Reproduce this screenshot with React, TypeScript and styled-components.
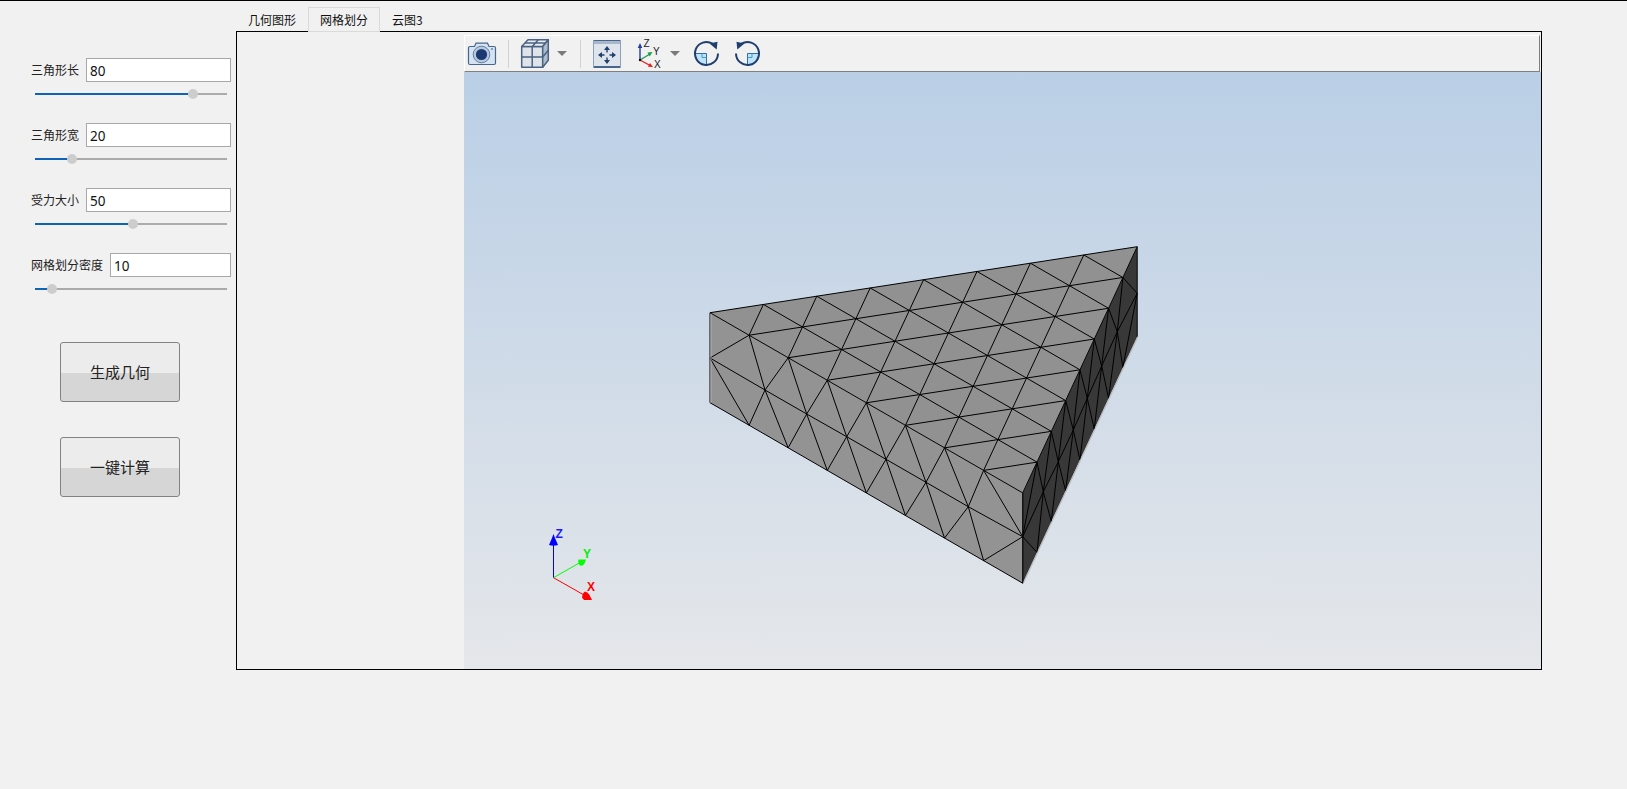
import React from "react";
import styled, { createGlobalStyle } from "styled-components";

const GlobalStyle = createGlobalStyle`
  html, body { margin: 0; padding: 0; background: #f1f1f1; overflow: hidden; }
  body { font-family: "Noto Sans CJK SC", "Noto Sans", sans-serif; }
  #root { width: 1627px; height: 789px; }
`;

const Page = styled.div`
  display: flex;
  width: 1627px;
  height: 789px;
  box-sizing: border-box;
  border-top: 1px solid #000;
  background: #f1f1f1;
`;

const Sidebar = styled.aside`
  width: 236px;
  flex: none;
  box-sizing: border-box;
  padding: 57px 0 0 31px;
  display: flex;
  flex-direction: column;
`;

const ParamGroup = styled.div`
  width: 200px;
  height: 42px;
  margin-bottom: 23px;
`;

const ParamRow = styled.div`
  display: flex;
  align-items: center;
  gap: 7px;
  height: 24px;
`;

const ParamLabel = styled.label`
  font-size: 12px;
  line-height: 24px;
  color: #222;
  white-space: nowrap;
`;

const ParamInput = styled.input`
  flex: 1;
  min-width: 0;
  height: 24px;
  box-sizing: border-box;
  border: 1px solid #a8a8a8;
  background: #fff;
  padding: 1px 0 0 3px;
  margin: 0;
  outline: none;
  font-family: "Noto Sans", sans-serif;
  font-size: 13.5px;
  color: #111;
`;

const SliderTrack = styled.div`
  position: relative;
  width: 192px;
  height: 2px;
  margin: 11px 0 0 4px;
  background: #ababab;
`;

const SliderFill = styled.div`
  height: 100%;
  background: #0f63b6;
`;

const SliderHandle = styled.div`
  position: absolute;
  top: -4px;
  width: 10px;
  height: 10px;
  margin-left: -5px;
  border-radius: 50%;
  background: #cdcdcd;
`;

const ActionButton = styled.button`
  display: block;
  width: 120px;
  height: 60px;
  margin: 0 0 35px 29px;
  padding: 0 0 2px;
  box-sizing: border-box;
  border: 1px solid #828282;
  border-radius: 3px;
  background: linear-gradient(#ececec 0 30px, #d6d6d6 30px 100%);
  font-family: inherit;
  font-size: 15px;
  color: #222;
`;

const ButtonStack = styled.div`
  margin-top: 24px;
`;

const Content = styled.main`
  width: 1306px;
  flex: none;
  padding-top: 6px;
`;

const TabBar = styled.div`
  position: relative;
  z-index: 1;
  display: flex;
  height: 24px;
`;

const Tab = styled.div<{ $active?: boolean }>`
  box-sizing: border-box;
  height: ${(p) => (p.$active ? "25px" : "24px")};
  padding: 0 ${(p) => (p.$active ? "11px" : "12px")};
  border: ${(p) => (p.$active ? "1px solid #dadada" : "1px solid transparent")};
  border-left-width: ${(p) => (p.$active ? "1px" : "0")};
  border-right-width: ${(p) => (p.$active ? "1px" : "0")};
  background: #f1f1f1;
  font-size: 12px;
  line-height: 24px;
  color: #111;
  white-space: nowrap;
`;

const Frame = styled.section`
  display: flex;
  box-sizing: border-box;
  height: 639px;
  border: 1px solid #000;
`;

const BlankSide = styled.div`
  width: 227px;
  flex: none;
`;

const Viewer = styled.div`
  flex: 1;
  min-width: 0;
  display: flex;
  flex-direction: column;
  padding-top: 3px;
`;

const Toolbar = styled.div`
  display: flex;
  align-items: center;
  box-sizing: border-box;
  height: 37px;
  flex: none;
  margin-right: 1px;
  padding-left: 3px;
  border-top: 1px solid #fff;
  border-left: 1px solid #fff;
  border-right: 1px solid #808080;
  border-bottom: 1px solid #808080;
`;

const ToolIcon = styled.svg<{ $gap?: number }>`
  display: block;
  flex: none;
  overflow: visible;
  margin-left: ${(p) => p.$gap ?? 0}px;
`;

const ToolSeparator = styled.div<{ $gap: number }>`
  width: 1px;
  height: 28px;
  flex: none;
  background: #d2d2d2;
  margin-left: ${(p) => p.$gap}px;
`;

const Viewport = styled.div`
  flex: 1;
  min-height: 0;
  background: linear-gradient(#bacfe6, #e5e7ea);
`;

const Scene = styled.svg`
  display: block;
  width: 100%;
  height: 100%;
`;

const AxisLabel = styled.text<{ $color: string; $size?: number; $weight?: number }>`
  font-family: "Liberation Sans", sans-serif;
  font-weight: ${(p) => p.$weight ?? 700};
  font-size: ${(p) => p.$size ?? 12}px;
  fill: ${(p) => p.$color};
`;

type Pt = [number, number];
const lerp = (a: Pt, b: Pt, t: number): Pt => [a[0] + (b[0] - a[0]) * t, a[1] + (b[1] - a[1]) * t];

const A: Pt = [710, 312.7];
const B: Pt = [1137.2, 246.7];
const C: Pt = [1022.7, 492.9];
const D: Pt = [1022.7, 583.2];
const E: Pt = [710, 402.7];
const F: Pt = [1137.2, 336.7];

const leftMid: Pt[] = [
  [710, 358], [765, 390], [806.7, 414], [846.7, 436.7],
  [886, 459.3], [926, 482.3], [968.3, 506.7], [1022.7, 536.7],
];
const rightMid: Pt[] = [
  [1137.2, 293.3], [1117.3, 331.7], [1101.7, 366], [1087.3, 398.3],
  [1073.3, 430], [1058.3, 461.7], [1043.3, 491.7], [1022.7, 536.7],
];

type Seg = [Pt, Pt];

function topFaceSegs(): Seg[] {
  const P = (i: number, j: number): Pt => [
    A[0] + (i / 8) * (B[0] - A[0]) + (j / 8) * (C[0] - A[0]),
    A[1] + (i / 8) * (B[1] - A[1]) + (j / 8) * (C[1] - A[1]),
  ];
  const segs: Seg[] = [];
  for (let k = 0; k < 8; k++) {
    segs.push([P(0, k), P(8 - k, k)]);
    segs.push([P(k, 0), P(k, 8 - k)]);
    segs.push([P(k + 1, 0), P(0, k + 1)]);
  }
  return segs;
}

function sideFaceSegs(t0: Pt, t1: Pt, b0: Pt, b1: Pt, mid: Pt[]): Seg[] {
  const T = (k: number) => lerp(t0, t1, k / 8);
  const L = (k: number) => lerp(b0, b1, k / 8);
  const segs: Seg[] = [
    [t0, mid[0]], [mid[0], b0], [t1, mid[7]], [mid[7], b1],
  ];
  for (let k = 0; k < 7; k++) {
    segs.push([mid[k], mid[k + 1]]);
    segs.push([mid[k], T(k + 1)]);
    segs.push([T(k + 1), mid[k + 1]]);
    segs.push([mid[k], L(k + 1)]);
    segs.push([L(k + 1), mid[k + 1]]);
  }
  return segs;
}

const poly = (...p: Pt[]) => p.map((q) => q.join(",")).join(" ");

const MeshLines: React.FC<{ segs: Seg[] }> = ({ segs }) => (
  <g stroke="#000" strokeWidth={1} fill="none">
    {segs.map(([a, b], i) => (
      <line key={i} x1={a[0]} y1={a[1]} x2={b[0]} y2={b[1]} />
    ))}
  </g>
);

const MeshSolid: React.FC = () => (
  <g>
    <polygon points={poly(B, F, D, C)} fill="#383838" />
    <MeshLines segs={sideFaceSegs(B, C, F, D, rightMid)} />
    <line x1={F[0] + 0.3} y1={F[1] + 0.8} x2={D[0] + 0.6} y2={D[1]} stroke="#b9bbbd" strokeWidth={1.1} />
    <polygon points={poly(A, C, D, E)} fill="#939393" />
    <MeshLines segs={sideFaceSegs(A, C, E, D, leftMid)} />
    <polygon points={poly(A, B, C)} fill="#919191" />
    <MeshLines segs={topFaceSegs()} />
    <line x1={E[0]} y1={E[1]} x2={D[0]} y2={D[1]} stroke="#000" />
    <line x1={A[0] + 0.9} y1={A[1] + 1} x2={E[0] + 0.9} y2={E[1]} stroke="#c6c6c6" strokeWidth={0.8} />
  </g>
);

const Triad: React.FC = () => (
  <g>
    <line x1={553.5} y1={577.7} x2={553.5} y2={544} stroke="#0000ff" strokeWidth={1} />
    <path d="M553.5 534 L555 538 L558 545 Q553.5 546.5 549 545 L552 538 Z" fill="#0000ff" />
    <AxisLabel x={555.5} y={537.5} $color="#1a1aff">Z</AxisLabel>
    <line x1={553.5} y1={577.7} x2={581} y2={562} stroke="#00ff00" strokeWidth={1} />
    <path d="M578.5 559.5 H586 L584.5 563.5 Q582.5 566.5 580 565.5 Q577.5 563 578.5 559.5 Z" fill="#00ff00" />
    <AxisLabel x={583} y={557.5} $color="#00f000">Y</AxisLabel>
    <line x1={553.5} y1={577.7} x2={584} y2={595} stroke="#ff0000" strokeWidth={1} />
    <path d="M585 591.5 Q588 592 589.5 595 L592 600 H584 L582 597.5 Q582.5 593 585 591.5 Z" fill="#ff0000" />
    <AxisLabel x={587} y={590.5} $color="#ff0000">X</AxisLabel>
  </g>
);

const SLATE = "#48668d";
const NAVY = "#1f3f6e";

const CameraIcon = () => (
  <ToolIcon width={28} height={23} viewBox="0 0 28 23">
    <path
      d="M2 4.5h4.5L8 1.2h11.5l1.5 3.3h5a1.5 1.5 0 0 1 1.5 1.5v15a1.5 1.5 0 0 1-1.5 1.5H2A1.5 1.5 0 0 1 .5 21V6A1.5 1.5 0 0 1 2 4.5z"
      fill="#d6e3f2"
      stroke={SLATE}
      strokeWidth={1.2}
    />
    <circle cx={13.5} cy={12.5} r={8.3} fill="#b8c9de" stroke="#5f7ea6" strokeWidth={1} />
    <circle cx={13.5} cy={12.5} r={5.6} fill="#1b3a74" />
    <circle cx={24} cy={7} r={1} fill="#6d87a8" />
  </ToolIcon>
);

const CubeIcon: React.FC<{ $gap: number }> = ({ $gap }) => (
  <ToolIcon $gap={$gap} width={28} height={29} viewBox="0 0 28 29">
    <g stroke="#4a6283" strokeWidth={1.5} strokeLinejoin="round">
      <rect x={0.7} y={7.5} width={21} height={20.8} fill="#dfe4ea" />
      <path d="M.7 7.5 7 .7h20.3l-5.6 6.8z" fill="#e9edf0" />
      <path d="M21.7 7.5l5.6-6.8v20.6l-5.6 7z" fill="#aebccd" />
      <path d="M11.2 7.5v20.8M.7 17.9h21M17.2.7l-5.8 6.8M4 4.1h20.5M21.7 17.9l5.6-6.7" fill="none" />
    </g>
  </ToolIcon>
);

const DropArrow: React.FC<{ $gap: number }> = ({ $gap }) => (
  <ToolIcon $gap={$gap} width={10} height={5} viewBox="0 0 10 5">
    <path d="M0 0h10L5 5z" fill="#7a7a7a" />
  </ToolIcon>
);

const FitIcon: React.FC<{ $gap: number }> = ({ $gap }) => (
  <ToolIcon $gap={$gap} width={28} height={28} viewBox="0 0 28 28">
    <rect x={0} y={0} width={28} height={28} fill="#dfe4ec" />
    <rect x={0} y={0} width={28} height={4} fill="#a9b7ca" />
    <rect x={0} y={0} width={28} height={1} fill={SLATE} />
    <rect x={0} y={26} width={28} height={2} fill={SLATE} />
    <rect x={0} y={0} width={1} height={28} fill="#8ea1ba" />
    <rect x={27} y={0} width={1} height={28} fill="#8ea1ba" />
    <path d="M14 9.5v3M14 17.5v3M8.5 15h3M16.5 15h3" stroke={NAVY} strokeWidth={1.4} />
    <path d="M14 6l-3 4h6zM14 24l-3-4h6zM5 15l4-3v6zM23 15l-4-3v6z" fill={NAVY} />
  </ToolIcon>
);

const AxesIcon: React.FC<{ $gap: number }> = ({ $gap }) => (
  <ToolIcon $gap={$gap} width={24} height={29} viewBox="0 0 24 29">
    <path d="M3 21V8" stroke="#2140a0" strokeWidth={1.4} />
    <path d="M3 4l-2.3 5h4.6z" fill="#2140a0" />
    <path d="M3 21l10-6" stroke="#18a050" strokeWidth={1.4} />
    <path d="M15.5 13l-5 .6 2.2 3.8z" fill="#18a050" />
    <path d="M3 21l11 6" stroke="#e52020" strokeWidth={1.4} />
    <path d="M16 28l-5-.2 2-3.8z" fill="#e52020" />
    <circle cx={3} cy={21} r={1.2} fill="#111" />
    <AxisLabel x={6.5} y={7.5} $color="#222" $size={10} $weight={400}>Z</AxisLabel>
    <AxisLabel x={16} y={16} $color="#222" $size={10} $weight={400}>Y</AxisLabel>
    <AxisLabel x={17} y={29} $color="#222" $size={10} $weight={400}>X</AxisLabel>
  </ToolIcon>
);

const RotateIcon: React.FC<{ $gap: number; $mirror?: boolean }> = ({ $gap, $mirror }) => (
  <ToolIcon $gap={$gap} width={25} height={25} viewBox="0 0 25 25">
    <g transform={$mirror ? "translate(25 0) scale(-1 1)" : undefined}>
      <path d="M12.5 12.5H1A11.5 11.5 0 0 0 12.5 24z" fill="#bfe3f7" stroke="#2f6fa8" strokeWidth={1} />
      <path d="M8 12.5v4h4.5" fill="none" stroke="#3f9ad6" strokeWidth={1} />
      <path d="M18.5 2.7A11.5 11.5 0 1 0 24 12.5" fill="none" stroke={NAVY} strokeWidth={2} />
      <path d="M23.5 .8L15.5 2.5 22.7 8.5z" fill={NAVY} />
    </g>
  </ToolIcon>
);

const params = [
  { label: "三角形长", value: 80 },
  { label: "三角形宽", value: 20 },
  { label: "受力大小", value: 50 },
  { label: "网格划分密度", value: 10 },
];

const Param: React.FC<{ label: string; value: number }> = ({ label, value }) => {
  const pos = value * 2.017 - 3.3;
  return (
    <ParamGroup>
      <ParamRow>
        <ParamLabel>{label}</ParamLabel>
        <ParamInput readOnly value={value} />
      </ParamRow>
      <SliderTrack>
        <SliderFill style={{ width: pos }} />
        <SliderHandle style={{ left: pos }} />
      </SliderTrack>
    </ParamGroup>
  );
};

export default function App() {
  return (
    <Page>
      <GlobalStyle />
      <Sidebar>
        {params.map((p) => (
          <Param key={p.label} {...p} />
        ))}
        <ButtonStack>
          <ActionButton>生成几何</ActionButton>
          <ActionButton>一键计算</ActionButton>
        </ButtonStack>
      </Sidebar>
      <Content>
        <TabBar>
          <Tab>几何图形</Tab>
          <Tab $active>网格划分</Tab>
          <Tab>云图3</Tab>
        </TabBar>
        <Frame>
          <BlankSide />
          <Viewer>
            <Toolbar>
              <CameraIcon />
              <ToolSeparator $gap={12} />
              <CubeIcon $gap={12} />
              <DropArrow $gap={8} />
              <ToolSeparator $gap={13} />
              <FitIcon $gap={12} />
              <AxesIcon $gap={16} />
              <DropArrow $gap={9} />
              <RotateIcon $gap={14} />
              <RotateIcon $gap={16} $mirror />
            </Toolbar>
            <Viewport>
              <Scene viewBox="464 72 1077 597">
                <MeshSolid />
                <Triad />
              </Scene>
            </Viewport>
          </Viewer>
        </Frame>
      </Content>
    </Page>
  );
}
